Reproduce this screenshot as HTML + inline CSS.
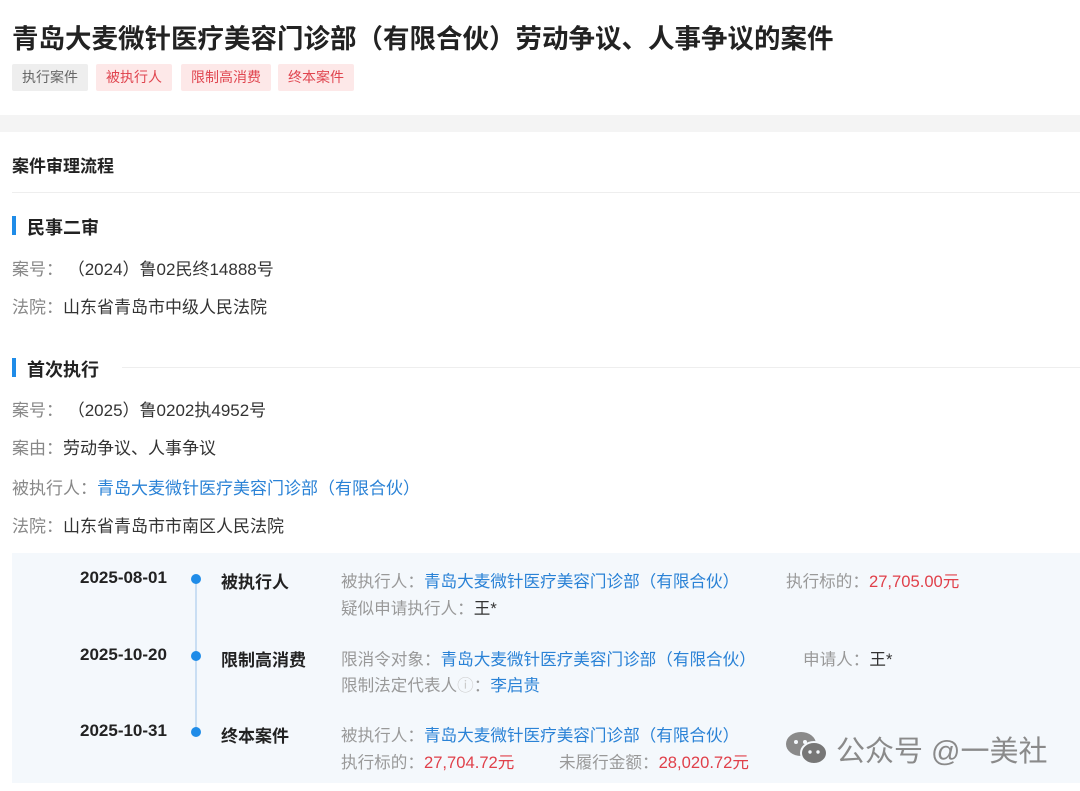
<!DOCTYPE html>
<html><head><meta charset="utf-8"><style>
*{margin:0;padding:0;box-sizing:border-box}
body{width:1080px;height:791px;background:#fff;font-family:"Liberation Sans","Noto Sans CJK SC",sans-serif;color:#333;position:relative;overflow:hidden}
.a{position:absolute;white-space:nowrap}
.t{font-size:26.5px;font-weight:bold;color:#222;left:12px;top:17px}
.tag{top:64px;height:27px;line-height:27px;font-size:14px;padding:0 10px;border-radius:2px}
.g{color:#666;background:#eee}.r{color:#e0454f;background:#fde8e8}
.l{font-size:17px;color:#333}
.k{color:#888}
.bl{color:#2a82d6}
.red{color:#e0404a}
.bar{width:4px;height:19px;background:#1f8ce8}
.h{font-size:18px;font-weight:bold;color:#222}
.d{font-size:17px;font-weight:bold;color:#222}
.dot{width:10px;height:10px;border-radius:50%;background:#1f8ce8}
.s{font-size:16.6px;color:#999}
</style></head><body>
<div class="a t">青岛大麦微针医疗美容门诊部（有限合伙）劳动争议、人事争议的案件</div>
<div class="a tag g" style="left:12px">执行案件</div>
<div class="a tag r" style="left:96px">被执行人</div>
<div class="a tag r" style="left:181px">限制高消费</div>
<div class="a tag r" style="left:278px">终本案件</div>
<div class="a" style="left:0;top:115px;width:1080px;height:17px;background:#f4f4f4"></div>
<div class="a h" style="left:12px;top:152px;font-size:17px">案件审理流程</div>
<div class="a" style="left:12px;top:192px;width:1068px;height:1px;background:#eee"></div>

<div class="a bar" style="left:12px;top:216px"></div>
<div class="a h" style="left:27px;top:214px">民事二审</div>
<div class="a l" style="left:12px;top:255px"><span class="k">案号：</span> （2024）鲁02民终14888号</div>
<div class="a l" style="left:12px;top:293px"><span class="k">法院：</span>山东省青岛市中级人民法院</div>

<div class="a bar" style="left:12px;top:358px"></div>
<div class="a h" style="left:27px;top:356px">首次执行</div>
<div class="a" style="left:122px;top:367px;width:958px;height:1px;background:#eee"></div>
<div class="a l" style="left:12px;top:396px"><span class="k">案号：</span> （2025）鲁0202执4952号</div>
<div class="a l" style="left:12px;top:434px"><span class="k">案由：</span>劳动争议、人事争议</div>
<div class="a l" style="left:12px;top:474px"><span class="k">被执行人：</span><span class="bl">青岛大麦微针医疗美容门诊部（有限合伙）</span></div>
<div class="a l" style="left:12px;top:512px"><span class="k">法院：</span>山东省青岛市市南区人民法院</div>

<div class="a" style="left:12px;top:553px;width:1068px;height:230px;background:#f4f8fc"></div>
<div class="a" style="left:195px;top:580px;width:2px;height:155px;background:#c9def3"></div>

<div class="a d" style="left:80px;top:568px">2025-08-01</div>
<div class="a dot" style="left:191px;top:574px"></div>
<div class="a d" style="left:221px;top:568px">被执行人</div>
<div class="a s" style="left:341px;top:568px">被执行人：<span class="bl">青岛大麦微针医疗美容门诊部（有限合伙）</span></div>
<div class="a s" style="left:786px;top:568px">执行标的：<span class="red">27,705.00元</span></div>
<div class="a s" style="left:341px;top:595px">疑似申请执行人：<span style="color:#333">王*</span></div>

<div class="a d" style="left:80px;top:645px">2025-10-20</div>
<div class="a dot" style="left:191px;top:651px"></div>
<div class="a d" style="left:221px;top:646px">限制高消费</div>
<div class="a s" style="left:341px;top:646px">限消令对象：<span class="bl">青岛大麦微针医疗美容门诊部（有限合伙）</span></div>
<div class="a s" style="left:803px;top:646px">申请人：<span style="color:#333">王*</span></div>
<div class="a s" style="left:341px;top:672px">限制法定代表人<span style="color:#ccc">ⓘ</span>：<span class="bl">李启贵</span></div>

<div class="a d" style="left:80px;top:721px">2025-10-31</div>
<div class="a dot" style="left:191px;top:727px"></div>
<div class="a d" style="left:221px;top:722px">终本案件</div>
<div class="a s" style="left:341px;top:722px">被执行人：<span class="bl">青岛大麦微针医疗美容门诊部（有限合伙）</span></div>
<div class="a s" style="left:341px;top:749px">执行标的：<span class="red">27,704.72元</span></div>
<div class="a s" style="left:559px;top:749px">未履行金额：<span class="red">28,020.72元</span></div>

<svg class="a" style="left:784px;top:730px" width="46" height="36" viewBox="0 0 46 36">
<ellipse cx="17" cy="14" rx="15" ry="12" fill="#8a8a8a"/>
<ellipse cx="30" cy="23" rx="13" ry="11" fill="#777" stroke="#f4f8fc" stroke-width="2"/>
<circle cx="12" cy="12" r="2" fill="#f4f8fc"/><circle cx="21" cy="12" r="2" fill="#f4f8fc"/>
<circle cx="26" cy="22" r="1.7" fill="#f4f8fc"/><circle cx="34" cy="22" r="1.7" fill="#f4f8fc"/>
</svg>
<div class="a" style="left:836px;top:728px;font-size:29px;color:#8a8a8a">公众号 @一美社</div>
</body></html>
